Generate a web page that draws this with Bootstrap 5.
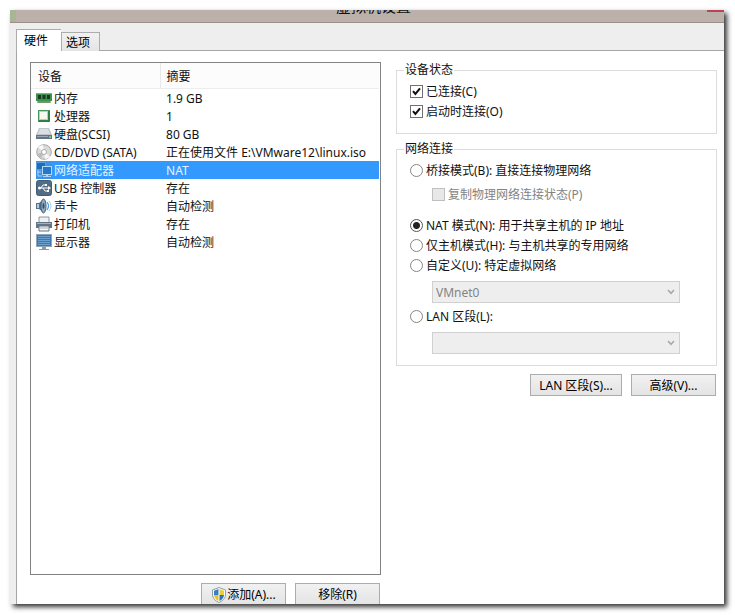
<!DOCTYPE html>
<html lang="zh-CN">
<head>
<meta charset="utf-8">
<meta name="viewport" content="width=device-width, initial-scale=1">
<title>虚拟机设置</title>
<link rel="stylesheet" href="https://cdn.jsdelivr.net/npm/bootstrap@5.3.0/dist/css/bootstrap.min.css">
<style>
body{font:12px/16px "Noto Sans","Noto Sans CJK SC",sans-serif;color:#111;background:#fff;padding:10px 11px 11px 10px}
.win{background:#eee;box-shadow:3px 3px 5px rgba(0,0,0,.8)}
.titlebar{height:13px;background:#bbb1aa;border-bottom:1px solid #9b9089}
.tb-edge{width:6px;background:#a9b596}
.tb-title{font-size:15px;line-height:20px;margin-top:-14px;padding-left:24px}
.tb-close{width:17px;height:2px;background:#b94456}
.tabs{height:28px;padding:0 0 0 6px;margin-bottom:-1px}
.tab-btn{border:1px solid #acacac;border-bottom:0;background:linear-gradient(#f1f1f1,#e4e4e4);width:39px;height:19px;line-height:16px;padding:2px 0 0 4px;text-align:left}
.tab-btn.active{background:#fff;width:45px;height:22px;padding:0 0 0 7px;border-right:0}
.pane{background:#fff;border:1px solid #a6a6a6;border-right:0;border-bottom:0;margin-left:6px;padding:11px 7px 0 13px;gap:15px}
.col-left{flex:351 1 0;min-width:0}
.col-right{flex:321 1 0;min-width:0}
.devices{border:1px solid #828282;background:#fff}
.devices table{table-layout:fixed;width:calc(100% - 1px)}
.devices th{height:25px;font-weight:400;background:#fcfcfc;border-bottom:1px solid #ededed;padding:4px 6px 0}
.devices th:first-child{padding-left:7px;border-right:1px solid #e8e8e8}
.devices td{height:18px;padding:1px 0 0 6px;white-space:nowrap;line-height:17px}
.devices td:first-child{padding:0 0 0 5px}
.devices td:nth-child(2){padding-left:2px}
.devices svg{display:block}
.devices tr.sel td:not(:first-child){background:#3399ff;color:#e6f2ff}
.actions{padding:8px 1px 0 0}
.wbtn{height:22px;min-width:85px;border:1px solid #acacac;background:linear-gradient(#f1f1f1,#e4e4e4);padding:1px 5px 0;white-space:nowrap}
.wbtn.wide{min-width:92px}
.wbtn.cut{height:21px;border-bottom:0;padding-top:2px}
.actions .wbtn+.wbtn{margin-left:1px}
.group{border:1px solid #dcdcdc;padding:3px 13px 12px}
.group+.group{margin-top:7px;padding-bottom:8px}
.group legend{float:none;width:auto;font-size:12px;line-height:16px;margin:0 0 0 -6px;padding:0 1px}
.opt{height:20px}
.opt label{padding-top:1px}
.opt input{appearance:none;width:13px;height:13px;border:1px solid #707070;background:#fff;margin:0 3px 0 0;flex:none}
.opt input[type=radio]{border-radius:50%;border-color:#858585}
.opt input[type=radio]:checked{background:radial-gradient(circle,#222 0 3px,#fff 4px);border-color:#555}
.opt input[type=checkbox]:checked{background:#fff url("data:image/svg+xml,%3Csvg xmlns='http://www.w3.org/2000/svg' viewBox='0 0 11 11'%3E%3Cpath d='M2 5.2 4.4 8 9 2.4' fill='none' stroke='%23111' stroke-width='2'/%3E%3C/svg%3E")}
.opt.sub{margin:4px 0 11px 22px;color:#838383}
.opt.sub input{background:#e8e8e8;border-color:#c0c0c0}
.combo{display:block;appearance:none;width:248px;max-width:100%;height:22px;margin:6px 0 3px 22px;padding:1px 20px 0 3px;border:1px solid #d0d0d0;border-radius:0;color:#838383;opacity:1;background:#eee url("data:image/svg+xml,%3Csvg xmlns='http://www.w3.org/2000/svg' width='8' height='6'%3E%3Cpath d='M1 1 4 4.4 7 1' fill='none' stroke='%23a8a8a8' stroke-width='1.6'/%3E%3C/svg%3E") no-repeat right 4px center}
</style>
</head>
<body class="vh-100 d-flex flex-column">
<main class="win flex-grow-1 d-flex flex-column">
  <header class="titlebar d-flex overflow-hidden">
    <span class="tb-edge"></span>
    <span class="tb-title flex-grow-1 text-center">虚拟机设置</span>
    <button class="tb-close border-0 p-0" type="button" aria-label="关闭"></button>
  </header>
  <div class="tabs d-flex align-items-end position-relative" role="tablist">
    <button class="tab-btn active" type="button" role="tab" aria-selected="true">硬件</button>
    <button class="tab-btn" type="button" role="tab" aria-selected="false">选项</button>
  </div>
  <div class="pane flex-grow-1 d-flex">
    <section class="col-left d-flex flex-column">
      <div class="devices flex-grow-1">
        <table>
          <colgroup><col style="width:21px"><col style="width:108px"><col></colgroup>
          <thead><tr><th colspan="2">设备</th><th>摘要</th></tr></thead>
          <tbody>
            <tr><td><svg width="16" height="16" viewBox="0 0 16 16"><path d="M0 3h16v8H0z" fill="#3f9150"/><path d="M0 3h16v1H0z" fill="#77b77c"/><path d="M2 5h3v4H2zM6.500 5h3v4h-3zM11 5h3v4h-3z" fill="#173d20"/><path d="M1 11h14v2H1z" fill="#9bbf8b"/><path d="M3 11v2M5 11v2M7 11v2M9 11v2M11 11v2M13 11v2" stroke="#367b3c"/></svg></td><td>内存</td><td>1.9 GB</td></tr>
            <tr><td><svg width="16" height="16" viewBox="0 0 16 16"><path d="M2 2h12v12H2z" fill="#4a9459"/><path d="M3 3h9v9H3z" fill="#b3d5b6"/><path d="M4 4h7v7H4z" fill="#f4faf2"/><path d="M3 13h10M13 3v10" stroke="#2d7540" stroke-width="1.500"/></svg></td><td>处理器</td><td>1</td></tr>
            <tr><td><svg width="16" height="16" viewBox="0 0 16 16"><path d="M3 2h10l3 7H0z" fill="#bfc5cd"/><path d="M4 3h8l2 5H2z" fill="#dce0e5"/><path d="M0 9h16v4H0z" fill="#667382"/><path d="M1 10h11v1H1z" fill="#9ca8b4"/><path d="M13 10h2v2h-2z" fill="#78d05c"/></svg></td><td>硬盘(SCSI)</td><td>80 GB</td></tr>
            <tr><td><svg width="16" height="16" viewBox="0 0 16 16"><circle cx="8" cy="8" r="7.300" fill="#dadada" stroke="#a5a5a5"/><path d="M8 8 2 3.500A7 7 0 0 1 7 1zM8 8l6 4.500A7 7 0 0 1 9 15z" fill="#f8f8f8"/><path d="M8 8 1.500 10A7 7 0 0 0 5 14z" fill="#bbb"/><circle cx="8" cy="8" r="2.500" fill="#fff" stroke="#aaa"/></svg></td><td>CD/DVD (SATA)</td><td>正在使用文件 E:\VMware12\linux.iso</td></tr>
            <tr class="sel"><td><svg width="16" height="18" viewBox="0 0 16 18"><path d="M0 0h16v18H0z" fill="#3b94ea"/><path d="M0 1h10v8H0z" fill="#5a9ede"/><path d="M1 2h8v6H1z" fill="#1f6db8"/><path d="M2 9v6h4M1 11h4" fill="none" stroke="#a9cff3"/><path d="M6 5h10v9H6z" fill="#b6d7f4"/><path d="M7 6h8v7H7z" fill="#2478c8"/><path d="M10 14h2v1h-2zM7 15h8v1H7z" fill="#b0d2f2"/></svg></td><td>网络适配器</td><td>NAT</td></tr>
            <tr><td><svg width="16" height="16" viewBox="0 0 16 16"><rect x=".5" y=".5" width="15" height="15" rx="2" fill="#526c84" stroke="#405c76"/><path d="M3 8h10M5 8l2-3h2M7 8l2 3h2" fill="none" stroke="#fff"/><circle cx="3.500" cy="8" r="1.500" fill="#fff"/><path d="M9 4h2v2H9zM11 10h2v2h-2zM12 6l3 2-3 2z" fill="#fff"/></svg></td><td>USB 控制器</td><td>存在</td></tr>
            <tr><td><svg width="16" height="16" viewBox="0 0 16 16"><path d="M0 5h3l5-4v14l-5-4H0z" fill="#55708a"/><path d="M1 6h2v4H1z" fill="#b9cad8"/><ellipse cx="7.500" cy="8" rx="2.500" ry="7" fill="#8eabc3" stroke="#44617e"/><ellipse cx="7.500" cy="8" rx="1" ry="3" fill="#334c65"/><path d="M11 4q3 4 0 8" fill="none" stroke="#459be0" stroke-width="1.200"/><path d="M13 3q4 5 0 10" fill="none" stroke="#a9d0f0"/></svg></td><td>声卡</td><td>自动检测</td></tr>
            <tr><td><svg width="16" height="16" viewBox="0 0 16 16"><path d="M3 1h10v6H3z" fill="#edf1f4" stroke="#8996a4"/><path d="M0 6h16v6H0z" fill="#657485"/><path d="M1 7h14v1H1z" fill="#a6b0ba"/><path d="M3 10h10v5H3z" fill="#f4f6f8" stroke="#657485"/><path d="M4 12h8" stroke="#a4aeb8"/></svg></td><td>打印机</td><td>存在</td></tr>
            <tr><td><svg width="16" height="16" viewBox="0 0 16 16"><path d="M0 0h16v13H0z" fill="#90a5b8"/><path d="M1 1h14v11H1z" fill="#3f78ae"/><path d="M2 2.500h12M2 4.500h12M2 6.500h12M2 8.500h12M2 10.500h12" stroke="#6a9fce"/><path d="M6 13h4v2H6z" fill="#8b9aa7"/><path d="M3 15h10v1H3z" fill="#8b9aa7"/></svg></td><td>显示器</td><td>自动检测</td></tr>
          </tbody>
        </table>
      </div>
      <div class="actions d-flex justify-content-end gap-2">
        <button class="wbtn cut d-flex align-items-center justify-content-center" type="button"><svg width="16" height="16" viewBox="0 0 16 16"><path d="M8 .5 14.500 3v5Q14 13 8 15.500 2 13 1.500 8V3z" fill="#fff" stroke="#8d9ba6"/><path d="M7.500 2v6H3V3.700z" fill="#3a7fc2"/><path d="M8.500 2v6H13V3.700z" fill="#e8cf38"/><path d="M7.500 8v6Q3.500 12 3 8z" fill="#e2c62f"/><path d="M8.500 8v6q4-2 4.500-6z" fill="#2f72b7"/></svg>添加(A)...</button>
        <button class="wbtn cut" type="button">移除(R)</button>
      </div>
    </section>
    <section class="col-right">
      <fieldset class="group">
        <legend>设备状态</legend>
        <div class="opt d-flex align-items-center"><input type="checkbox" id="c1" checked><label for="c1">已连接(C)</label></div>
        <div class="opt d-flex align-items-center"><input type="checkbox" id="c2" checked><label for="c2">启动时连接(O)</label></div>
      </fieldset>
      <fieldset class="group">
        <legend>网络连接</legend>
        <div class="opt d-flex align-items-center"><input type="radio" name="net" id="r1"><label for="r1">桥接模式(B): 直接连接物理网络</label></div>
        <div class="opt sub d-flex align-items-center"><input type="checkbox" id="c3" disabled><label for="c3">复制物理网络连接状态(P)</label></div>
        <div class="opt d-flex align-items-center"><input type="radio" name="net" id="r2" checked><label for="r2">NAT 模式(N): 用于共享主机的 IP 地址</label></div>
        <div class="opt d-flex align-items-center"><input type="radio" name="net" id="r3"><label for="r3">仅主机模式(H): 与主机共享的专用网络</label></div>
        <div class="opt d-flex align-items-center"><input type="radio" name="net" id="r4"><label for="r4">自定义(U): 特定虚拟网络</label></div>
        <select class="combo" aria-label="特定虚拟网络" disabled><option>VMnet0</option></select>
        <div class="opt d-flex align-items-center"><input type="radio" name="net" id="r5"><label for="r5">LAN 区段(L):</label></div>
        <select class="combo" aria-label="LAN 区段" disabled><option></option></select>
      </fieldset>
      <div class="actions d-flex justify-content-end gap-2">
        <button class="wbtn wide" type="button">LAN 区段(S)...</button>
        <button class="wbtn" type="button">高级(V)...</button>
      </div>
    </section>
  </div>
</main>
<script src="https://cdn.jsdelivr.net/npm/bootstrap@5.3.0/dist/js/bootstrap.bundle.min.js"></script>
</body>
</html>
